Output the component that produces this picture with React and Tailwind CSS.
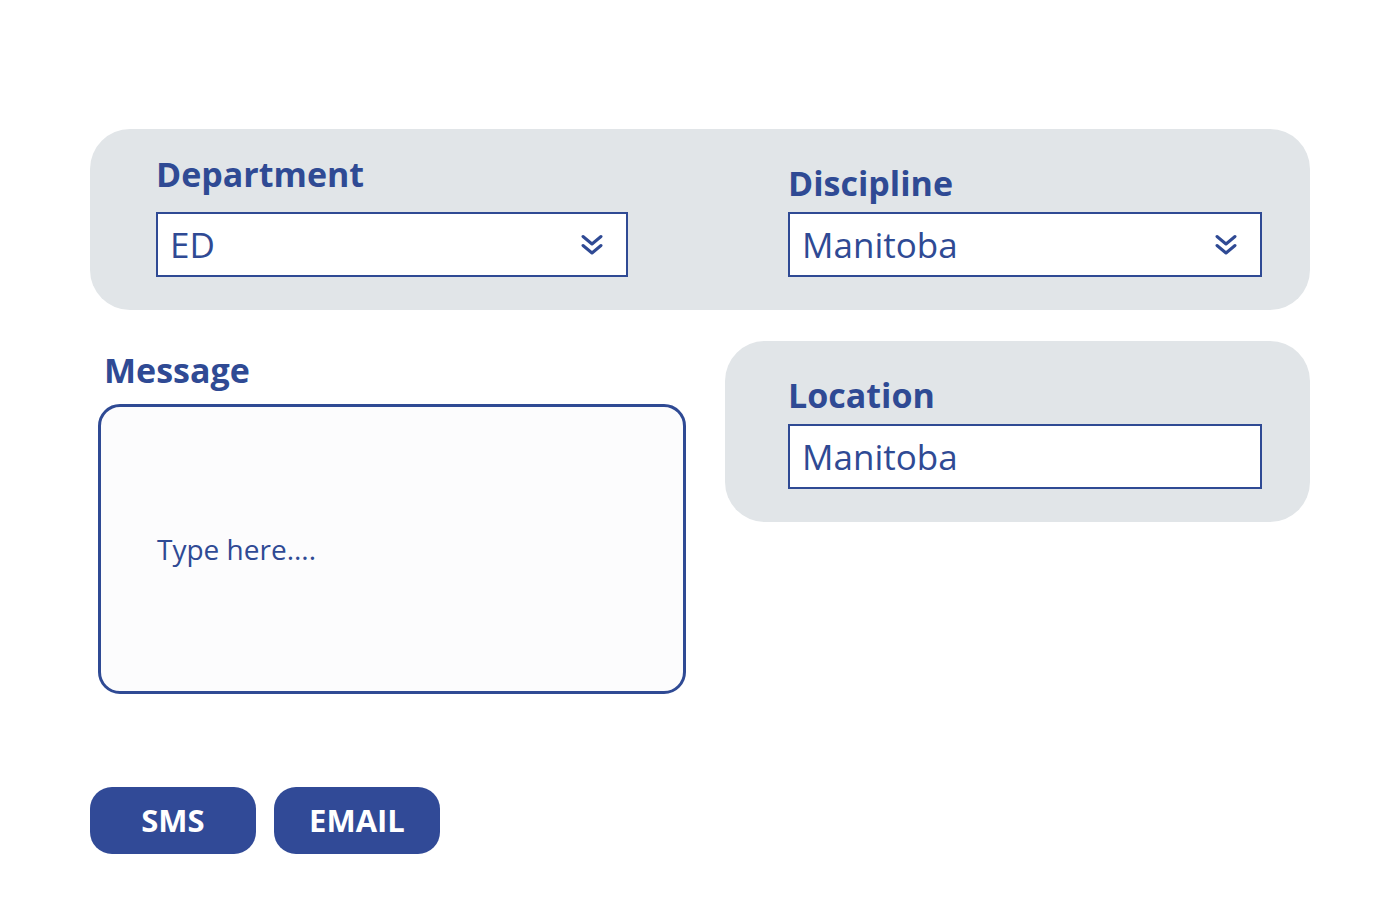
function ChevronsDown() {
  return (
    <svg width="22" height="22" viewBox="0 0 22 22" fill="none" stroke="#2f4a94" strokeWidth="3" strokeLinecap="round" strokeLinejoin="round">
      <path d="M2 2.5 L11 10 L20 2.5" />
      <path d="M2 11.5 L11 19 L20 11.5" />
    </svg>
  );
}

function Field({ value, dropdown }) {
  return (
    <div className="h-[65px] border-2 border-[#2f4a94] bg-white flex items-center justify-between pl-[12px] pr-[23px]">
      <span className="text-[35px] leading-[35px] text-[#2f4a94]">{value}</span>
      {dropdown && <ChevronsDown />}
    </div>
  );
}

export default function App() {
  return (
    <div className="min-h-screen bg-white font-['Open_Sans',sans-serif]">
      <div className="pl-[90px] pt-[129px] w-[1310px]">
        {/* top panel */}
        <div className="h-[181px] rounded-[40px] bg-[#e1e5e8] flex pl-[66px] pr-[48px] gap-[160px]">
          <div className="w-[472px] flex flex-col justify-end pb-[33px]">
            <h2 className="text-[34px] leading-[34px] font-bold text-[#2f4a94] mb-[21px]">Department</h2>
            <Field value="ED" dropdown />
          </div>
          <div className="w-[474px] flex flex-col justify-end pb-[33px]">
            <h2 className="text-[34px] leading-[34px] font-bold text-[#2f4a94] mb-[12px]">Discipline</h2>
            <Field value="Manitoba" dropdown />
          </div>
        </div>

        {/* second row */}
        <div className="mt-[31px] flex gap-[39px] pl-[8px]">
          <div className="w-[588px] pt-[12px]">
            <h2 className="text-[34px] leading-[34px] font-bold text-[#2f4a94] ml-[6px] mb-[17px]">Message</h2>
            <div className="h-[290px] rounded-[22px] border-[3px] border-[#2f4a94] bg-[#fcfcfd] flex items-center pl-[56px]">
              <span className="text-[28px] leading-[28px] text-[#2f4a94]">Type here....</span>
            </div>
          </div>
          <div className="w-[585px] h-[181px] rounded-[40px] bg-[#e1e5e8] pl-[63px] pr-[48px] pt-[37px]">
            <h2 className="text-[34px] leading-[34px] font-bold text-[#2f4a94] mb-[12px]">Location</h2>
            <Field value="Manitoba" />
          </div>
        </div>

        {/* buttons */}
        <div className="mt-[93px] flex gap-[18px]">
          <button className="w-[166px] h-[67px] rounded-[22px] bg-[#314a97] text-white text-[31px] font-bold">SMS</button>
          <button className="w-[166px] h-[67px] rounded-[22px] bg-[#314a97] text-white text-[31px] font-bold">EMAIL</button>
        </div>
      </div>
    </div>
  );
}
